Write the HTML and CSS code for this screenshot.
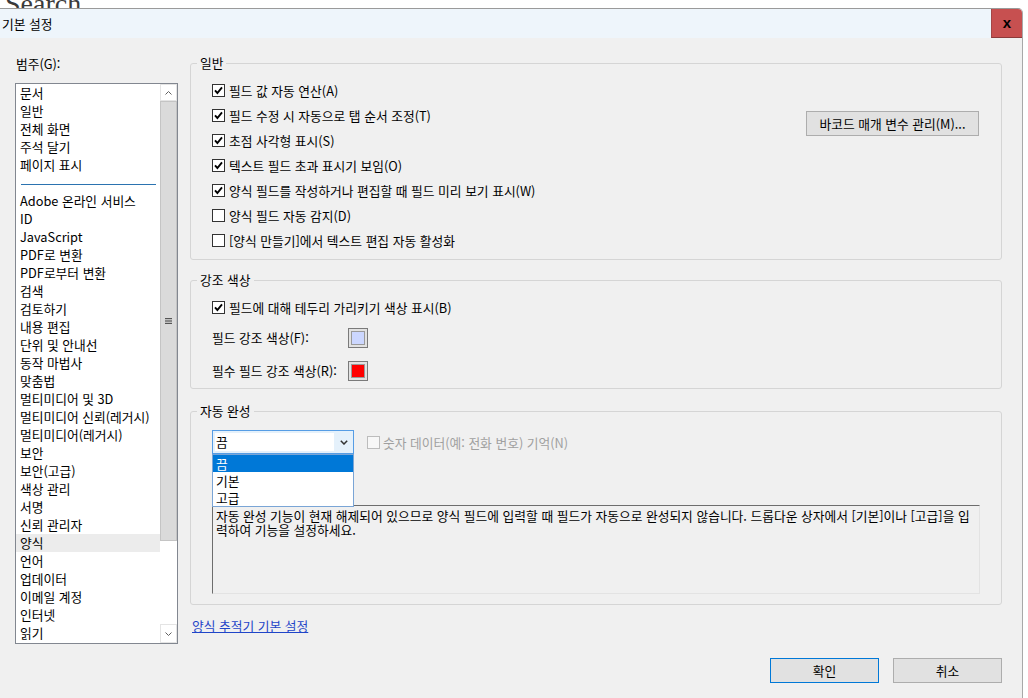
FILE: index.html
```html
<!DOCTYPE html>
<html lang="ko">
<head>
  <meta charset="UTF-8" />
  <title>기본 설정</title>
  <link rel="stylesheet" href="styles.css">
</head>
<body>
  <div class="behind"><span>Search</span></div>

  <div class="dialog">
    <div class="titlebar">
      <div class="title">기본 설정</div>
      <button class="close">x</button>
    </div>

    <div class="content">
      <div class="category">
        <div class="cat-label">범주(G):</div>
        <div class="listbox">
          <ul class="items">
            <li>문서</li>
            <li>일반</li>
            <li>전체 화면</li>
            <li>주석 달기</li>
            <li>페이지 표시</li>
            <li class="sep"><span></span></li>
            <li>Adobe 온라인 서비스</li>
            <li>ID</li>
            <li>JavaScript</li>
            <li>PDF로 변환</li>
            <li>PDF로부터 변환</li>
            <li>검색</li>
            <li>검토하기</li>
            <li>내용 편집</li>
            <li>단위 및 안내선</li>
            <li>동작 마법사</li>
            <li>맞춤법</li>
            <li>멀티미디어 및 3D</li>
            <li>멀티미디어 신뢰(레거시)</li>
            <li>멀티미디어(레거시)</li>
            <li>보안</li>
            <li>보안(고급)</li>
            <li>색상 관리</li>
            <li>서명</li>
            <li>신뢰 관리자</li>
            <li class="selected">양식</li>
            <li>언어</li>
            <li>업데이터</li>
            <li>이메일 계정</li>
            <li>인터넷</li>
            <li>읽기</li>
          </ul>
          <div class="scrollbar">
            <div class="sb-btn sb-up">
              <svg width="7" height="4" viewBox="0 0 7 4"><path d="M0.5 3.5 3.5 0.5 6.5 3.5" fill="none" stroke="#606060"/></svg>
            </div>
            <div class="sb-thumb">
              <svg width="7" height="6" viewBox="0 0 7 6"><rect y="0" width="7" height="1.2" fill="#555"/><rect y="2.4" width="7" height="1.2" fill="#555"/><rect y="4.8" width="7" height="1.2" fill="#555"/></svg>
            </div>
            <div class="sb-track"></div>
            <div class="sb-btn sb-down">
              <svg width="7" height="4" viewBox="0 0 7 4"><path d="M0.5 0.5 3.5 3.5 6.5 0.5" fill="none" stroke="#606060"/></svg>
            </div>
          </div>
        </div>
      </div>

      <div class="panel">
        <fieldset class="group general">
          <legend>일반</legend>
          <div class="group-body">
            <div class="checks">
              <div class="check-row"><span class="box"><svg viewBox="0 0 11 11"><path d="M2 5.3 4.4 8 9 2.4" fill="none" stroke="#000" stroke-width="1.9"/></svg></span>필드 값 자동 연산(A)</div>
              <div class="check-row"><span class="box"><svg viewBox="0 0 11 11"><path d="M2 5.3 4.4 8 9 2.4" fill="none" stroke="#000" stroke-width="1.9"/></svg></span>필드 수정 시 자동으로 탭 순서 조정(T)</div>
              <div class="check-row"><span class="box"><svg viewBox="0 0 11 11"><path d="M2 5.3 4.4 8 9 2.4" fill="none" stroke="#000" stroke-width="1.9"/></svg></span>초점 사각형 표시(S)</div>
              <div class="check-row"><span class="box"><svg viewBox="0 0 11 11"><path d="M2 5.3 4.4 8 9 2.4" fill="none" stroke="#000" stroke-width="1.9"/></svg></span>텍스트 필드 초과 표시기 보임(O)</div>
              <div class="check-row"><span class="box"><svg viewBox="0 0 11 11"><path d="M2 5.3 4.4 8 9 2.4" fill="none" stroke="#000" stroke-width="1.9"/></svg></span>양식 필드를 작성하거나 편집할 때 필드 미리 보기 표시(W)</div>
              <div class="check-row"><span class="box"></span>양식 필드 자동 감지(D)</div>
              <div class="check-row"><span class="box"></span>[양식 만들기]에서 텍스트 편집 자동 활성화</div>
            </div>
            <button class="btn barcode-btn">바코드 매개 변수 관리(M)...</button>
          </div>
        </fieldset>

        <fieldset class="group accent">
          <legend>강조 색상</legend>
          <div class="group-body">
            <div class="check-row"><span class="box"><svg viewBox="0 0 11 11"><path d="M2 5.3 4.4 8 9 2.4" fill="none" stroke="#000" stroke-width="1.9"/></svg></span>필드에 대해 테두리 가리키기 색상 표시(B)</div>
            <div class="color-row first">
              <span class="color-label">필드 강조 색상(F):</span>
              <span class="swatch"><span class="swatch-fill light"></span></span>
            </div>
            <div class="color-row">
              <span class="color-label">필수 필드 강조 색상(R):</span>
              <span class="swatch"><span class="swatch-fill red"></span></span>
            </div>
          </div>
        </fieldset>

        <fieldset class="group autofill">
          <legend>자동 완성</legend>
          <div class="group-body">
            <div class="combo-row">
              <div class="combo">
                <div class="combo-field">끔</div>
                <div class="combo-arrow">
                  <svg width="8" height="5" viewBox="0 0 8 5"><path d="M0.8 0.8 4 4 7.2 0.8" fill="none" stroke="#333" stroke-width="1.5"/></svg>
                </div>
                <ul class="dropdown">
                  <li class="active">끔</li>
                  <li>기본</li>
                  <li>고급</li>
                </ul>
              </div>
              <div class="check-row disabled"><span class="box"></span>숫자 데이터(예: 전화 번호) 기억(N)</div>
            </div>
            <div class="description">자동 완성 기능이 현재 해제되어 있으므로 양식 필드에 입력할 때 필드가 자동으로 완성되지 않습니다. 드롭다운 상자에서 [기본]이나 [고급]을 입력하여 기능을 설정하세요.</div>
          </div>
        </fieldset>

        <a href="#" class="tracker-link">양식 추적기 기본 설정</a>

        <div class="footer">
          <button class="btn default">확인</button>
          <button class="btn">취소</button>
        </div>
      </div>
    </div>
  </div>
</body>
</html>
```

FILE: styles.css
```css
* {
  margin: 0;
  padding: 0;
  box-sizing: border-box;
}

body {
  width: 1028px;
  height: 698px;
  overflow: hidden;
  background-color: #fff;
  color: #000;
  font-family: "Noto Sans CJK KR", sans-serif;
  font-size: 12.75px;
}

/* window behind the dialog */
.behind {
  height: 8px;
  overflow: hidden;
  padding-left: 5px;
  font-family: "Liberation Serif", serif;
  font-size: 28px;
  line-height: 28px;
  color: #3a3a3a;
}

.behind span {
  display: block;
  margin-top: -10px;
}

.dialog {
  width: 1023px;
  height: 690px;
  background-color: #f0f0f0;
  border-top: 1px solid #9a9a9a;
  border-right: 1px solid #a8a8a8;
  border-top-right-radius: 5px;
  overflow: hidden;
}

.titlebar {
  display: flex;
  height: 29px;
  background-color: #eef5fb;
}

.title {
  flex: 1;
  padding-left: 2px;
  line-height: 29px;
}

.close {
  width: 31px;
  height: 29px;
  background-color: #c75050;
  border: none;
  border-left: 1px solid #a44646;
  border-bottom: 1px solid #8c3a3a;
  color: #000;
  font: bold 15px "Liberation Sans", sans-serif;
  line-height: 24px;
}

.content {
  display: grid;
  grid-template-columns: 163px 812px;
  column-gap: 12px;
  padding-left: 15px;
}

/* category list */
.cat-label {
  margin-top: 18px;
  padding-left: 1px;
  line-height: 16px;
}

.listbox {
  display: flex;
  height: 561px;
  margin-top: 11px;
  background-color: #fff;
  border: 1px solid #828790;
}

.items {
  flex: 1;
  list-style: none;
}

.items li {
  padding-left: 4px;
  line-height: 18px;
  white-space: nowrap;
}

.items li.sep {
  height: 18px;
  padding-top: 10px;
}

.items li.sep span {
  display: block;
  width: 135px;
  margin-left: 1px;
  border-top: 1px solid #2b73b0;
}

.items li.selected {
  background-color: #ececec;
}

.scrollbar {
  display: flex;
  flex-direction: column;
  width: 17px;
}

.sb-btn {
  display: flex;
  align-items: center;
  justify-content: center;
  border: 1px solid #e4e4e4;
}

.sb-up {
  height: 17px;
}

.sb-down {
  height: 19px;
}

.sb-thumb {
  display: flex;
  align-items: center;
  justify-content: center;
  height: 440px;
  background-color: #dadada;
  border: 1px solid #c4c4c4;
}

.sb-track {
  flex: 1;
}

/* right panel */
.panel {
  display: flex;
  flex-direction: column;
}

.group {
  min-width: 0;
  border: 1px solid #d5d5d5;
  border-radius: 3px;
}

.group legend {
  margin-left: 6px;
  padding: 0 3px;
  line-height: 14px;
}

.check-row {
  display: flex;
  align-items: center;
  height: 25px;
  white-space: nowrap;
}

.box {
  display: flex;
  flex: none;
  width: 13px;
  height: 13px;
  margin-right: 4px;
  background-color: #fff;
  border: 1px solid #333;
}

.box svg {
  width: 11px;
  height: 11px;
}

.btn {
  height: 25px;
  background-color: #e1e1e1;
  border: 1px solid #adadad;
  color: #000;
  font-family: inherit;
  font-size: 12.75px;
}

.general {
  margin-top: 18px;
}

.general .group-body {
  display: flex;
  justify-content: space-between;
  align-items: flex-start;
  padding: 8px 22px 6px 21px;
}

.barcode-btn {
  width: 173px;
  margin-top: 33px;
}

.accent {
  margin-top: 13px;
}

.accent .group-body {
  padding: 8px 0 1px 21px;
}

.color-row {
  display: flex;
  align-items: center;
  height: 33px;
}

.color-row.first {
  margin-top: 1px;
}

.color-label {
  width: 136px;
}

.swatch {
  display: block;
  width: 20px;
  height: 20px;
  padding: 2px;
  background-color: #e2e2e2;
  border: 1px solid #7a7a7a;
}

.swatch-fill {
  display: block;
  height: 100%;
  border: 1px solid #9a9a9a;
}

.swatch-fill.light {
  background-color: #ccd7ff;
}

.swatch-fill.red {
  background-color: #ff0000;
}

.autofill {
  margin-top: 15px;
}

.autofill .group-body {
  padding: 12px 21px 10px 21px;
}

.combo-row {
  display: flex;
  align-items: center;
  height: 24px;
}

.combo {
  position: relative;
  display: flex;
  width: 142px;
  height: 24px;
  padding: 2px 0 2px 2px;
  background-color: #e5f1fb;
  border: 1px solid #569de5;
}

.combo-field {
  width: 119px;
  padding-left: 1px;
  background-color: #fff;
  line-height: 18px;
}

.combo-arrow {
  display: flex;
  flex: 1;
  align-items: center;
  justify-content: center;
}

.dropdown {
  position: absolute;
  top: 23px;
  left: -1px;
  z-index: 2;
  width: 142px;
  list-style: none;
  background-color: #fff;
  border: 1px solid #7aa5d6;
}

.dropdown li {
  padding-left: 3px;
  line-height: 17px;
}

.dropdown li.active {
  background-color: #0078d7;
  color: #fff;
}

.check-row.disabled {
  margin-left: 13px;
  color: #a0a0a0;
}

.check-row.disabled .box {
  margin-right: 3px;
  border-color: #bcbcbc;
  background-color: #f7f7f7;
}

.description {
  height: 89px;
  margin-top: 51px;
  padding: 3px;
  line-height: 14px;
  border-top: 1px solid #6d6d6d;
  border-left: 1px solid #6d6d6d;
  border-right: 1px solid #e3e3e3;
  border-bottom: 1px solid #e3e3e3;
}

.tracker-link {
  align-self: flex-start;
  margin-top: 14px;
  padding-left: 2px;
  color: #1f45c8;
  line-height: 14px;
}

.footer {
  display: flex;
  justify-content: flex-end;
  gap: 14px;
  margin-top: 25px;
}

.footer .btn {
  width: 109px;
}

.btn.default {
  border-color: #0078d7;
}
```
